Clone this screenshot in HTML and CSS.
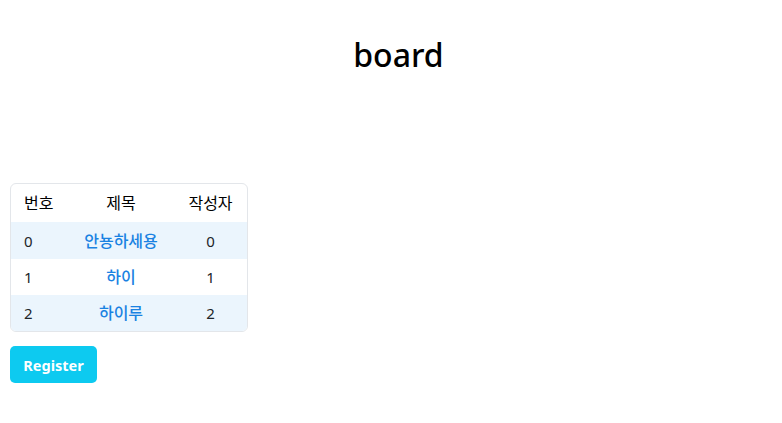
FILE: index.html
```html
<!DOCTYPE html>
<html lang="ko">
<head>
<meta charset="utf-8">
<link rel="stylesheet" href="styles.css">
</head>
<body>
<div class="page">
  <h1 class="title">board</h1>
  <div class="table-wrap">
    <table class="board">
      <thead>
        <tr><th class="c-no">번호</th><th class="c-title">제목</th><th class="c-author">작성자</th></tr>
      </thead>
      <tbody>
        <tr class="striped"><td class="c-no">0</td><td class="c-title"><a href="#">안뇽하세용</a></td><td class="c-author">0</td></tr>
        <tr><td class="c-no">1</td><td class="c-title"><a href="#">하이</a></td><td class="c-author">1</td></tr>
        <tr class="striped"><td class="c-no">2</td><td class="c-title"><a href="#">하이루</a></td><td class="c-author">2</td></tr>
      </tbody>
    </table>
  </div>
  <button class="btn-register" type="button">Register</button>
</div>
</body>
</html>
```
FILE: styles.css
```css
html, body {
  margin: 0;
  padding: 0;
  background: #ffffff;
}
body {
  font-family: "Noto Sans", "Noto Sans CJK KR", sans-serif;
  color: #212529;
}
.page {
  padding: 0 10px;
}
.title {
  margin: 0;
  padding: 33px 0 0 15px;
  height: 150px;
  box-sizing: border-box;
  text-align: center;
  font-size: 32px;
  font-weight: 500;
  line-height: 44px;
  color: #000;
}
.table-wrap {
  margin-top: 33px;
  width: 236px;
  border: 1px solid #e3e6ea;
  border-radius: 6px;
  overflow: hidden;
}
.board {
  width: 100%;
  border-collapse: collapse;
  font-size: 15px;
}
.board th, .board td {
  padding: 0;
  font-weight: 400;
  line-height: 20px;
}
.board th {
  height: 38px;
  color: #000;
  font-size: 16px;
}
.board td {
  height: 36px;
}
.board tbody tr:first-child td {
  height: 37px;
}
.c-no {
  width: 57px;
  text-align: left;
  padding-left: 13px !important;
  box-sizing: border-box;
}
.c-title {
  width: 106px;
  text-align: center;
}
.c-author {
  text-align: center;
}
.striped td {
  background: #ebf5fd;
}
.board a {
  color: #1a82e2;
  text-decoration: none;
  font-weight: 500;
  font-size: 16px;
}
.btn-register {
  display: block;
  margin-top: 14px;
  width: 87px;
  height: 37px;
  border: none;
  border-radius: 5px;
  background: #0dcaf0;
  color: #fff;
  font-family: "Noto Sans", sans-serif;
  font-weight: 700;
  font-size: 14.5px;
  padding: 0;
}
```
